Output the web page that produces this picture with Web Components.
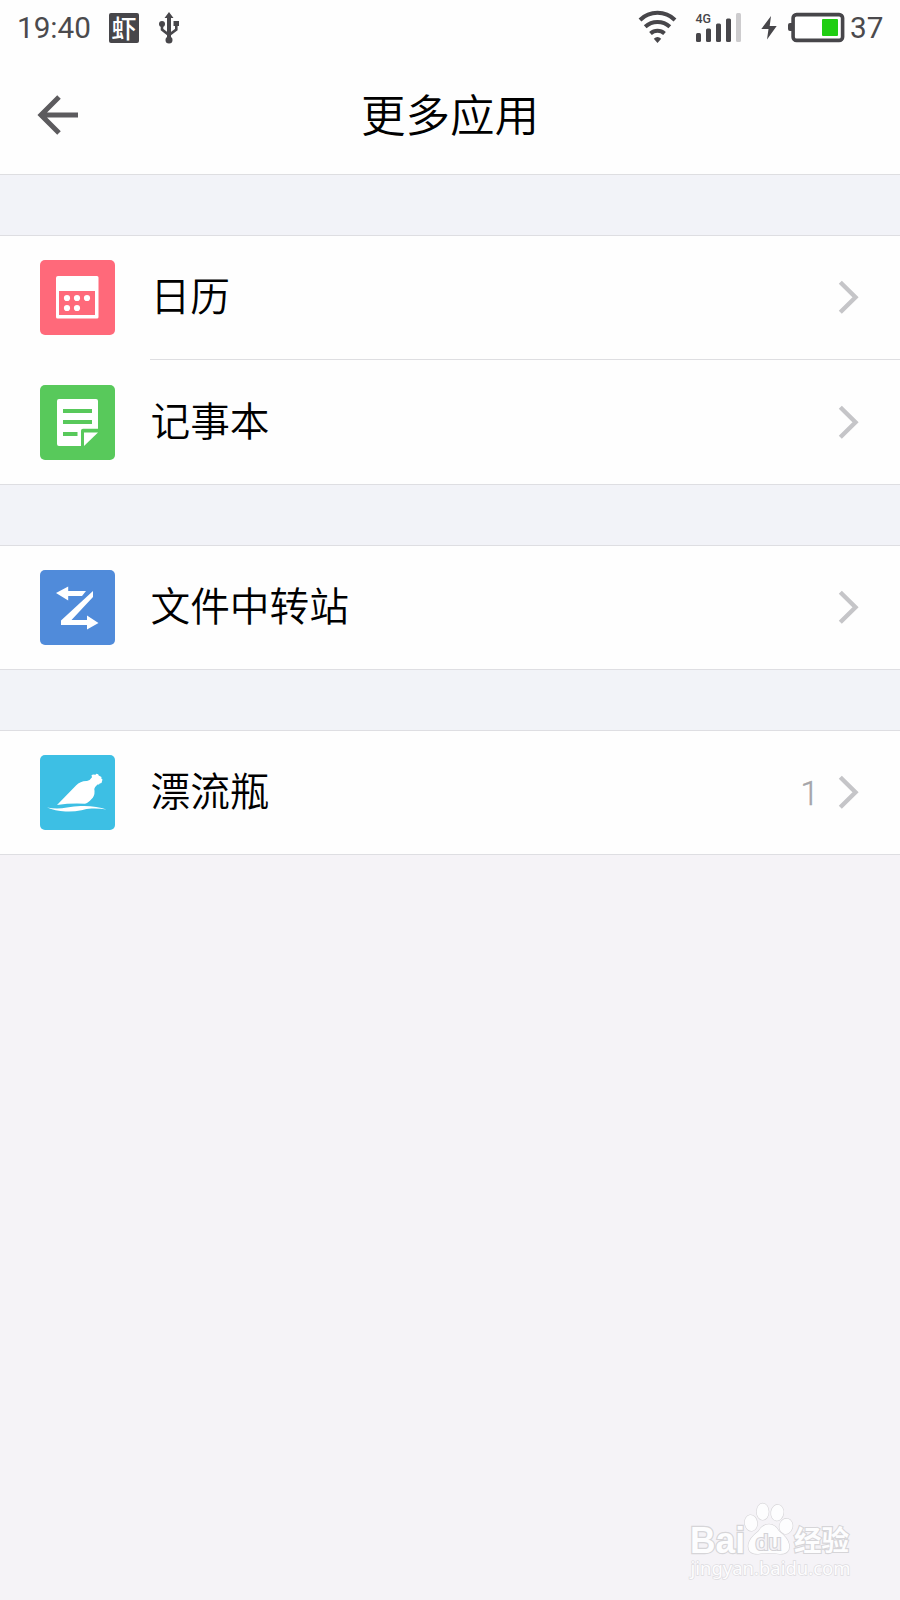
<!DOCTYPE html>
<html lang="zh-CN">
<head>
<meta charset="utf-8">
<title>更多应用</title>
<style>
html, body { margin: 0; height: 100%; }
body {
	background: #f5f3f7;
	color: #000;
	font-family: Roboto, "Noto Sans CJK SC", sans-serif;
	overflow: hidden;
}
</style>
</head>
<body>
<more-apps></more-apps>

<script>
function define(name, html) {
	const template = document.createElement('template');
	template.innerHTML = html;

	customElements.define(name, class extends HTMLElement {
		constructor() {
			super();
			this.attachShadow({ mode: 'open' });
			this.shadowRoot.appendChild(template.content.cloneNode(true));
		}
	});
}

define('status-bar', `
<style>
:host { display: flex; height: 55px; align-items: center; justify-content: space-between; padding: 0 17px 0 17px; box-sizing: border-box; font-size: 29.700px; line-height: 55px; color: #4b4a4d; }
div { display: flex; align-items: center; height: 55px; }
svg { display: block; flex: none; }
.clock { width: 92px; }
.badge { width: 30px; height: 30px; margin-right: 19px; border-radius: 2px; background: #47464a; color: #fff; font: 500 25px/28px "Noto Sans CJK SC", sans-serif; text-align: center; }
.level { width: 33px; }
</style>
<div>
	<span class="clock">19:40</span>
	<span class="badge">虾</span>
	<svg width="22" height="32" viewBox="0 0 22 32" fill="#47464a">
		<path d="M11 0l4.500 6H13v19H9V6H6.500z"/>
		<circle cx="11" cy="28" r="3.500"/>
		<circle cx="4" cy="12" r="3"/>
		<path d="M15.500 9H21v5h-5.500z"/>
		<path d="M4 13v4.500l7 5.500 7.300-5.500V12" fill="none" stroke="#47464a" stroke-width="2.600"/>
	</svg>
</div>
<div>
	<svg width="212" height="55" viewBox="0 0 212 55" fill="#47464a">
		<g fill="none" stroke="#47464a" stroke-width="4">
			<path d="M2 20a25 25 0 0 1 35 0"/>
			<path d="M7.200 26.800a18 18 0 0 1 24.600 0"/>
			<path d="M12.500 33.500a10.500 10.500 0 0 1 14 0"/>
		</g>
		<path d="M15.800 38.700q3.700-3.200 7.400 0L19.500 43z"/>
		<text x="57.500" y="23" font-size="13.500" font-weight="500" textLength="15.500" lengthAdjust="spacingAndGlyphs">4G</text>
		<rect x="58" y="33" width="5" height="9" rx="1.500"/>
		<rect x="68" y="28.500" width="5" height="13.500" rx="1.500"/>
		<rect x="78" y="23.500" width="5" height="18.500" rx="1.500"/>
		<rect x="88" y="18.500" width="5" height="23.500" rx="1.500"/>
		<rect x="98" y="13" width="5" height="29" rx="1.500" fill="#cdccce"/>
		<path d="M133 16l-9.700 13h7.200L129 39.500 138.700 26h-7z"/>
		<path d="M154.500 23h-2.500q-2 0-2 2v4q0 2 2 2h2.500z"/>
		<rect x="155.100" y="14.600" width="49.500" height="25.800" rx="3.500" fill="#fff" stroke="#47464a" stroke-width="3.600"/>
		<rect x="184" y="19" width="16" height="17" rx="1" fill="#20ce12"/>
	</svg>
	<span class="level">37</span>
</div>
`);

define('title-bar', `
<style>
:host { display: grid; grid-template-columns: 100px 1fr 100px; height: 120px; align-items: center; box-sizing: border-box; padding-top: 1px; border-bottom: 1px solid #dedee1; }
svg { display: block; margin-left: 37px; }
h1 { margin: 0; padding-top: 4px; font-size: 44.500px; font-weight: 350; line-height: 60px; text-align: center; }
</style>
<svg width="42" height="42" viewBox="0 0 42 42" fill="none" stroke="#5c5b5e" stroke-width="5"><path d="M4 21h37M22 3L4 21l18 18"/></svg>
<h1><slot></slot></h1>
`);

define('app-group', `
<style>
:host { display: block; margin-top: 60px; background: #fefefe; border: solid #dedee2; border-width: 1px 0; }
</style>
<slot></slot>
`);

define('app-row', `
<style>
:host { display: flex; height: 123px; align-items: center; padding: 0 40px; }
:host(.divided) { padding-top: 1px; height: 124px; background: linear-gradient(#dedee1, #dedee1) 150px 0 / 750px 1px no-repeat; }
.label { flex: 1; margin-left: 35.500px; padding-top: 1px; font-size: 39.700px; font-weight: 350; line-height: 60px; }
.count { margin-right: 19px; padding-top: 2px; color: #a5a5a9; font-size: 34px; font-weight: 300; -webkit-text-stroke: .3px; line-height: 39px; }
svg { display: block; }
</style>
<slot name="icon"></slot>
<span class="label"><slot></slot></span>
<span class="count"><slot name="count"></slot></span>
<svg width="22" height="35" viewBox="0 0 22 35" fill="none" stroke="#c5c5c8" stroke-width="4.400"><path d="M2.300 2.200L17.500 17.200 2.300 32.200"/></svg>
`);

const ICONS = {
	calendar: ['#ff697a', `
		<path fill-rule="evenodd" d="M18 16h39q1.500 0 1.500 1.500V57q0 1.500-1.500 1.500H17.500Q16 58.500 16 57V18q0-2 2-2zM19 31v24h36V31z"/>
		<circle cx="27" cy="38" r="3.100"/><circle cx="37" cy="38" r="3.100"/><circle cx="47" cy="38" r="3.100"/>
		<circle cx="27" cy="48" r="3.100"/><circle cx="37" cy="48" r="3.100"/>`],
	note: ['#58c95b', `
		<path d="M19 14h37q2 0 2 2v27.800H43q-2 0-2 2V61H19q-2 0-2-2V16q0-2 2-2z"/>
		<path d="M44 47.500h14L44 61z"/>
		<path d="M23 26h29M23 37h29M23 49h14.500" stroke="#58c95b" stroke-width="4.200"/>`],
	transfer: ['#508bda', `
		<path d="M16 23l12.200-6.500v4.500H46l-4 5H28.200v4.500zM53 21v6L31.500 50H47v-4.500L58.500 53 47 59.500V55H21v-4.500z"/>`],
	bottle: ['#3dbfe4', `
		<path d="M17 50L36 30.500Q40.500 25.700 47 26q3.500-1 5-3.700l-.500-2 1.500-.800 2.500.300.800-1 1.900.500.500 1.300 2.800 1.300-.200 1.600 1.200 1-1 3.500-1.800.400-.700 1.200-1.500-.200q-3 2.600-3.200 4.600 1 5-1.500 8.700-2.800 3.300-5.800 5.300L45 48.800q-14-.800-28 1.200z"/>
		<path d="M7 52.500q10 2 20 0 9-2 17-1.500 13 0 22.500 3.500-7-1.300-15-1-5 .300-10 1.700-8 1.800-16 1.300Q15 56 7 52.500z"/>`]
};

class AppIcon extends HTMLElement {
	constructor() {
		super();
		this.attachShadow({ mode: 'open' });
	}

	connectedCallback() {
		const [color, shapes] = ICONS[this.getAttribute('name')];
		this.shadowRoot.innerHTML = `<style>:host{display:block;flex:none;width:75px;height:75px;border-radius:5px;background:${color}}svg{display:block}</style><svg width="75" height="75" viewBox="0 0 75 75" fill="#fff">${shapes}</svg>`;
	}
}

customElements.define('app-icon', AppIcon);

define('site-watermark', `
<style>
:host { display: block; position: absolute; right: 44px; bottom: 18px; }
svg { display: block; }
</style>
<svg width="170" height="82" viewBox="0 0 170 82" fill="#fdfdfe" stroke="#d6d5d8" stroke-width="1.200" paint-order="stroke">
	<g font-family="Liberation Sans, sans-serif">
		<text x="4" y="52.500" font-size="36" font-weight="700" textLength="55" lengthAdjust="spacingAndGlyphs" stroke-width="2.400">Bai</text>
		<ellipse cx="65" cy="23" rx="6.200" ry="8" transform="rotate(-8 65 23)"/>
		<ellipse cx="76.700" cy="11.700" rx="6" ry="8.300"/>
		<ellipse cx="91.300" cy="12.700" rx="6.200" ry="8" transform="rotate(8 91.300 12.700)"/>
		<ellipse cx="100" cy="26.300" rx="6.500" ry="7.700" transform="rotate(15 100 26.300)"/>
		<path d="M83 24.300q6 0 10 7 9 7 10 13 1.500 9.700-9 9.700-5-1-11-1t-11 1q-11 0-9.500-9.700 1-6 10-13 4-7 10.500-7z"/>
		<text x="69.500" y="49.500" font-size="22" textLength="26" lengthAdjust="spacingAndGlyphs" fill="#f5f3f7" stroke="#d3d2d6" stroke-width="2.200">du</text>
		<text x="108" y="50.500" font-family="Noto Sans CJK SC, sans-serif" font-size="28" font-weight="700" textLength="55" lengthAdjust="spacingAndGlyphs" stroke-width="2.200">经验</text>
	</g>
	<text x="4.500" y="75" font-family="Noto Sans, sans-serif" font-size="18.500" textLength="160" lengthAdjust="spacingAndGlyphs" stroke="#dddce0" stroke-width="1.400">jingyan.baidu.com</text>
</svg>
`);

define('more-apps', `
<style>
:host { display: block; position: relative; height: 1600px; overflow: hidden; }
header { background: #fefefe; }
main { display: flow-root; background: #f2f3f8; }
</style>
<header>
	<status-bar></status-bar>
	<title-bar>更多应用</title-bar>
</header>
<main>
	<app-group>
		<app-row><app-icon slot="icon" name="calendar"></app-icon>日历</app-row>
		<app-row class="divided"><app-icon slot="icon" name="note"></app-icon>记事本</app-row>
	</app-group>
	<app-group>
		<app-row><app-icon slot="icon" name="transfer"></app-icon>文件中转站</app-row>
	</app-group>
	<app-group>
		<app-row><app-icon slot="icon" name="bottle"></app-icon>漂流瓶<span slot="count">1</span></app-row>
	</app-group>
</main>
<site-watermark></site-watermark>
`);
</script>
</body>
</html>
